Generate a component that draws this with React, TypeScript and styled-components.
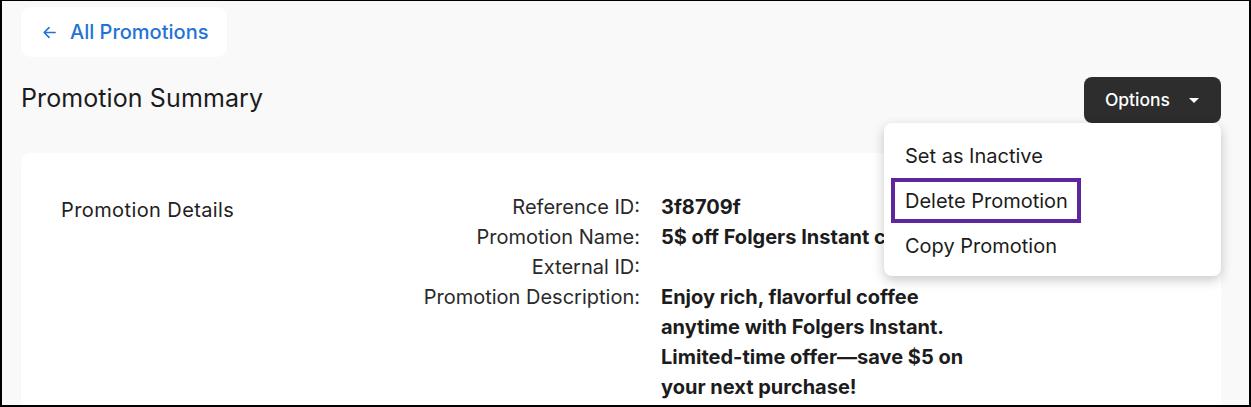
import React from "react";
import styled, { createGlobalStyle } from "styled-components";

const GlobalStyle = createGlobalStyle`
  html, body {
    margin: 0;
    padding: 0;
    background: #f9f9f9;
  }
  body {
    font-family: Inter, "Noto Sans", sans-serif;
    color: #1f1f1f;
  }
  * { box-sizing: border-box; }
`;

const Frame = styled.div`
  width: 1251px;
  height: 407px;
  overflow: hidden;
  background: #f9f9f9;
  border-style: solid;
  border-color: #000;
  border-width: 1px 2px 2px 2px;
  padding: 6px 28px 0 19px;
`;

const BackLink = styled.a`
  display: inline-flex;
  align-items: center;
  gap: 13px;
  height: 50px;
  padding: 0 19px 0 21px;
  background: #fff;
  border-radius: 10px;
  color: #1f74d6;
  font-size: 20px;
  font-weight: 500;
  text-decoration: none;
`;

const Header = styled.div`
  position: relative;
  display: flex;
  align-items: center;
  justify-content: space-between;
  margin-top: 19px;
  height: 47px;
`;

const Title = styled.h1`
  margin: 0;
  font-size: 25px;
  font-weight: 400;
  color: #1c1c1c;
  letter-spacing: 0.1px;
  transform: translateY(-2px);
`;

const OptionsButton = styled.button`
  display: flex;
  align-items: center;
  gap: 19px;
  height: 46px;
  padding: 0 22px 0 21px;
  background: #2d2d2d;
  color: #fff;
  border: none;
  border-radius: 8px;
  font-family: inherit;
  font-size: 17.5px;
  font-weight: 500;
`;

const Caret = styled.span`
  width: 0;
  height: 0;
  border-left: 5px solid transparent;
  border-right: 5px solid transparent;
  border-top: 5px solid #fff;
  margin-top: 1px;
`;

const Menu = styled.div`
  position: absolute;
  right: 0;
  top: 47px;
  width: 337px;
  padding: 10px 7px 8px 7px;
  background: #fff;
  border-radius: 8px;
  box-shadow: 0 4px 12px rgba(0, 0, 0, 0.22);
  display: flex;
  flex-direction: column;
  z-index: 2;
`;

const MenuItem = styled.div<{ $focused?: boolean }>`
  display: flex;
  align-items: center;
  align-self: flex-start;
  height: 45px;
  padding: 0 13px 0 14px;
  font-size: 20px;
  color: #1c1c1c;
  outline: ${(p) => (p.$focused ? "4px solid #5f259f" : "none")};
  outline-offset: -4px;
`;

const Card = styled.div`
  margin-top: 30px;
  background: #fff;
  border-radius: 10px;
  padding: 39px 40px 0 40px;
  display: grid;
  grid-template-columns: 360px 1fr;
  align-content: start;
  align-items: start;
  height: 300px;
`;

const SectionTitle = styled.div`
  font-size: 20px;
  color: #222;
  letter-spacing: 0.4px;
  padding-top: 3px;
  line-height: 30px;
`;

const Details = styled.div`
  display: grid;
  grid-template-columns: 219px 305px;
  column-gap: 21px;
  align-content: start;
  font-size: 20px;
  line-height: 30px;
`;

const Label = styled.div`
  text-align: right;
  color: #2a2a2a;
  white-space: nowrap;
`;

const Value = styled.div`
  font-weight: 700;
  color: #1c1c1c;
  white-space: pre-line;
`;

const rows: [string, string][] = [
  ["Reference ID:", "3f8709f"],
  ["Promotion Name:", "5$ off Folgers Instant coffee"],
  ["External ID:", ""],
  [
    "Promotion Description:",
    "Enjoy rich, flavorful coffee\nanytime with Folgers Instant.\nLimited-time offer\u2014save $5 on\nyour next purchase!",
  ],
];

function ArrowLeft() {
  return (
    <svg width="15" height="15" viewBox="0 0 16 16" fill="none">
      <path
        d="M14 8H2.5M7.5 2.8L2.3 8l5.2 5.2"
        stroke="#1f74d6"
        strokeWidth="1.7"
        strokeLinecap="round"
        strokeLinejoin="round"
      />
    </svg>
  );
}

export default function App() {
  return (
    <Frame>
      <GlobalStyle />
      <BackLink href="#">
        <ArrowLeft />
        All Promotions
      </BackLink>
      <Header>
        <Title>Promotion Summary</Title>
        <OptionsButton>
          Options
          <Caret />
        </OptionsButton>
        <Menu>
          <MenuItem>Set as Inactive</MenuItem>
          <MenuItem $focused>Delete Promotion</MenuItem>
          <MenuItem>Copy Promotion</MenuItem>
        </Menu>
      </Header>
      <Card>
        <SectionTitle>Promotion Details</SectionTitle>
        <Details>
          {rows.map(([label, value]) => (
            <React.Fragment key={label}>
              <Label>{label}</Label>
              <Value>{value}</Value>
            </React.Fragment>
          ))}
        </Details>
      </Card>
    </Frame>
  );
}
